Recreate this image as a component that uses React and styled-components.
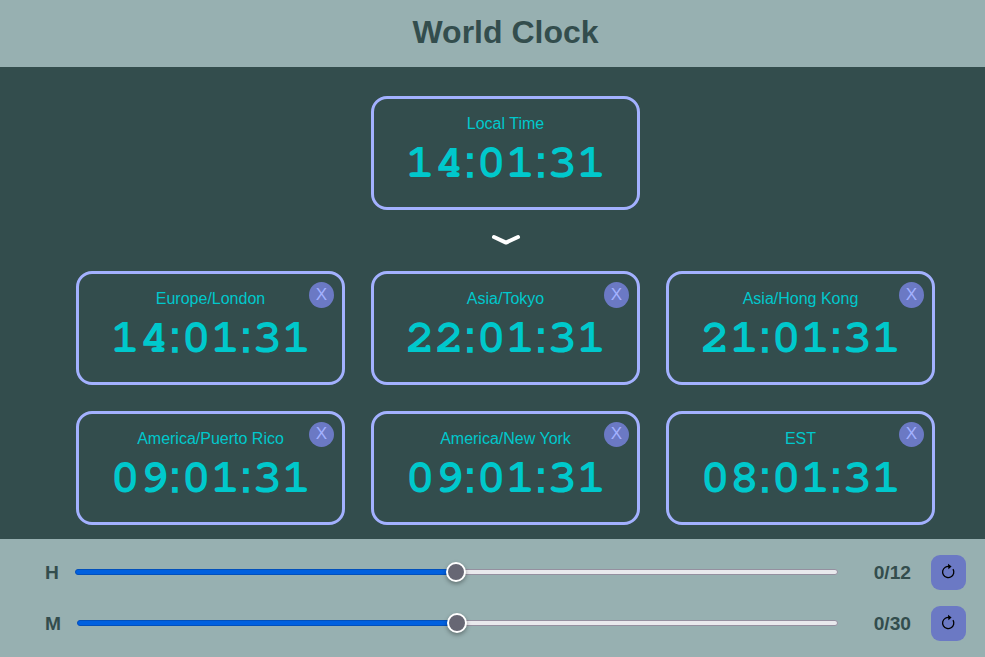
import React from 'react';
import styled, { createGlobalStyle } from 'styled-components';

const GlobalStyle = createGlobalStyle`
  *, *::before, *::after { box-sizing: border-box; }
  body {
    margin: 0;
    overflow: hidden;
    background: #334d4d;
    font-family: "Liberation Sans", Arial, sans-serif;
    font-size: 16px;
  }
`;

const Page = styled.div`
  display: flex;
  flex-direction: column;
  height: 100vh;
  background: #334d4d;
`;

const Header = styled.header`
  flex: none;
  height: 67px;
  padding: 14px 0 0 26px;
  background: #97b0b1;
  text-align: center;
`;

const Title = styled.h1`
  margin: 0;
  color: #334d4d;
  font-size: 32px;
  line-height: 37px;
`;

const Main = styled.main`
  flex: 1;
  display: flex;
  flex-direction: column;
  align-items: center;
  padding: 29px 0 0 26px;
`;

const Card = styled.section`
  position: relative;
  width: 269px;
  height: 114px;
  padding-top: 16px;
  border: 3px solid #a3b1ff;
  border-radius: 16px;
  color: #00c8cc;
  text-align: center;
`;

const Zone = styled.div`
  line-height: 18px;
`;

const Time = styled.div`
  display: flex;
  justify-content: center;
  align-items: baseline;
  margin-top: 4px;
  line-height: 50px;
  white-space: nowrap;
`;

const Digits = styled.span`
  display: inline-block;
  font-family: FreeMono, "Liberation Mono", monospace;
  font-size: 48px;
  font-weight: 700;
  transform: scale(1.02, 0.95);
  transform-origin: 50% 74%;
`;

const Colon = styled.span`
  width: 13.3px;
  font-size: 43px;
  text-align: center;
  -webkit-text-stroke: 1.4px currentColor;
`;

const CloseButton = styled.button`
  position: absolute;
  top: 8px;
  right: 8px;
  width: 25px;
  height: ${p => p.$height}px;
  padding: 0 0 2px;
  border: 0;
  border-radius: 50%;
  background: #6b79c4;
  color: #a3b1ff;
  font: 17px/23px "Liberation Sans", Arial, sans-serif;
`;

const Chevron = styled.svg`
  flex: none;
  display: block;
  width: 30px;
  height: 12px;
  margin: 24px 0 25px;
`;

const Grid = styled.div`
  display: grid;
  grid-template-columns: repeat(3, 269px);
  gap: 26px;
`;

const Footer = styled.footer`
  flex: none;
  display: flex;
  flex-direction: column;
  gap: 16px;
  height: 118px;
  padding: 16px 19px 0 45px;
  background: #97b0b1;
`;

const Control = styled.div`
  display: flex;
  align-items: center;
  height: 35px;
  color: #334d4d;
  font-size: 19.2px;
  font-weight: 700;
`;

const Label = styled.label`
  width: ${p => p.$width}px;
`;

const Track = styled.div`
  flex: 1;
  display: flex;
  align-items: center;
  height: 6px;
  margin-bottom: 1px;
  border: 1px solid #9590a0;
  border-radius: 3px;
  background: #e9e9ed;
`;

const Fill = styled.div`
  flex: none;
  width: 50%;
  height: 6px;
  margin-left: -1px;
  border: 1px solid #0250bb;
  border-radius: 3px 0 0 3px;
  background: #0060df;
`;

const Thumb = styled.div`
  flex: none;
  width: 20px;
  height: 20px;
  margin-left: -9.5px;
  border: 2px solid #fff;
  border-radius: 50%;
  background: #676774;
  box-shadow: 0 2px 4px rgba(0, 0, 0, 0.35);
`;

const Value = styled.output`
  width: 93px;
  padding-right: 20px;
  text-align: right;
`;

const ResetButton = styled.button`
  display: grid;
  place-items: center;
  width: 35px;
  height: 35px;
  padding: 0;
  border: 0;
  border-radius: 9px;
  background: #6b79c4;
`;

const ResetIcon = styled.svg`
  width: 15px;
  height: 17px;
  margin: 0 1px 2px 0;
`;

const clocks = [
  ['Europe/London', '14:01:31'],
  ['Asia/Tokyo', '22:01:31'],
  ['Asia/Hong Kong', '21:01:31'],
  ['America/Puerto Rico', '09:01:31'],
  ['America/New York', '09:01:31'],
  ['EST', '08:01:31'],
];

function Clock({ zone, time, closeHeight }) {
  const [h, m, s] = time.split(':');
  return (
    <Card>
      <Zone>{zone}</Zone>
      <Time>
        <Digits>{h}</Digits><Colon>:</Colon><Digits>{m}</Digits><Colon>:</Colon><Digits>{s}</Digits>
      </Time>
      {closeHeight && <CloseButton $height={closeHeight}>X</CloseButton>}
    </Card>
  );
}

function Slider({ label, labelWidth, value }) {
  return (
    <Control>
      <Label $width={labelWidth}>{label}</Label>
      <Track><Fill /><Thumb /></Track>
      <Value>{value}</Value>
      <ResetButton aria-label="Reset">
        <ResetIcon viewBox="0 0 15 17" fill="none" stroke="#000">
          <path d="M8.5 3.4C7 3.1 5.6 3.4 4.3 4.2A5.6 5.6 0 1 0 12 6.1" strokeWidth="1.3" />
          <path d="M7 0.8L10.6 3.6L7.4 6.2Z" fill="#000" stroke="none" />
        </ResetIcon>
      </ResetButton>
    </Control>
  );
}

export default function App() {
  return (
    <Page>
      <GlobalStyle />
      <Header><Title>World Clock</Title></Header>
      <Main>
        <Clock zone="Local Time" time="14:01:31" />
        <Chevron viewBox="0 0 30 12" fill="none" stroke="#fff" strokeWidth="4" strokeLinecap="round" strokeLinejoin="round">
          <path d="M3 3L15 8.6L27 3" />
        </Chevron>
        <Grid>
          {clocks.map(([zone, time], i) => (
            <Clock key={zone} zone={zone} time={time} closeHeight={i < 3 ? 26 : 25} />
          ))}
        </Grid>
      </Main>
      <Footer>
        <Slider label="H" labelWidth={30} value="0/12" />
        <Slider label="M" labelWidth={32} value="0/30" />
      </Footer>
    </Page>
  );
}
